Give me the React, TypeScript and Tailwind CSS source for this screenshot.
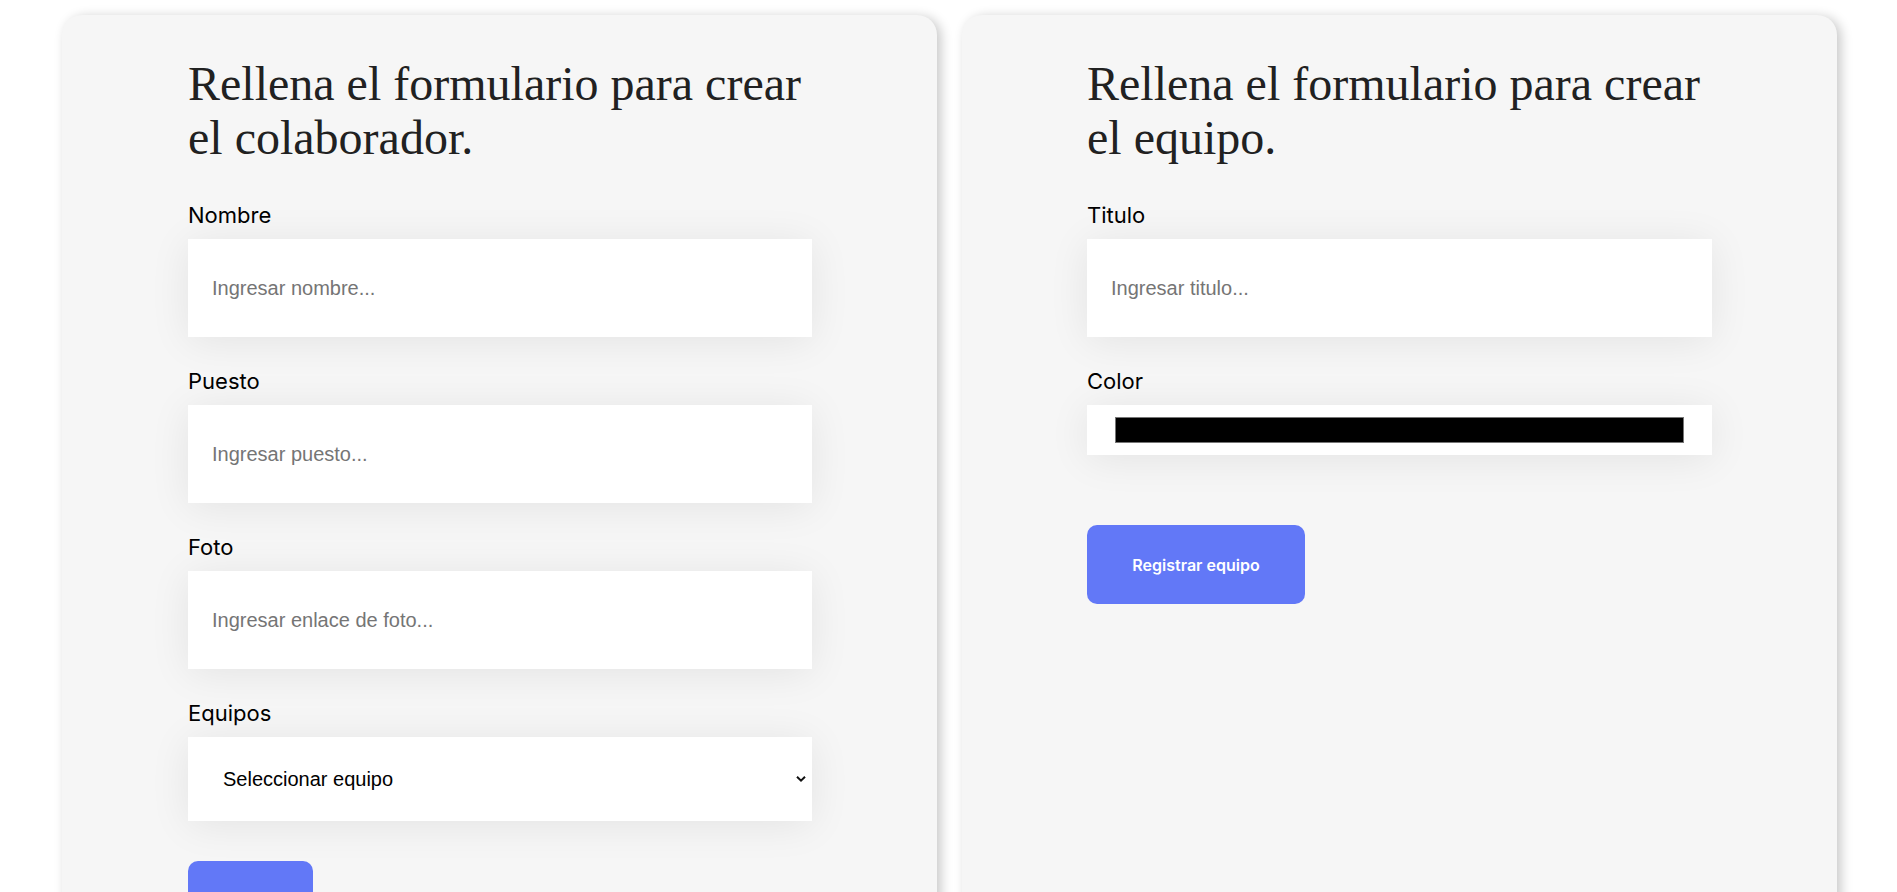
import React from "react";

interface Field {
  id: string;
  label: string;
  placeholder: string;
}

const collaboratorFields: Field[] = [
  { id: "nombre", label: "Nombre", placeholder: "Ingresar nombre..." },
  { id: "puesto", label: "Puesto", placeholder: "Ingresar puesto..." },
  { id: "foto", label: "Foto", placeholder: "Ingresar enlace de foto..." },
];

const labelClass =
  "block mb-[11px] text-[22px] leading-[26px] text-black font-['Inter',sans-serif]";

const boxShadow = "shadow-[0_4px_40px_rgba(0,0,0,0.08)]";

function TextField({ field }: { field: Field }) {
  return (
    <div className="mb-[31px]">
      <label htmlFor={field.id} className={labelClass}>
        {field.label}
      </label>
      <input
        id={field.id}
        type="text"
        placeholder={field.placeholder}
        className={`block h-[98px] w-full bg-white px-[24px] text-[20px] text-black outline-none placeholder:text-[#757575] font-['Liberation_Sans',Arial,sans-serif] ${boxShadow}`}
      />
    </div>
  );
}

function Title({ children }: { children: React.ReactNode }) {
  return (
    <h2 className="mb-[37px] text-[48px] leading-[54px] font-normal text-[#212121] font-['Liberation_Serif','Times_New_Roman',serif]">
      {children}
    </h2>
  );
}

export default function App() {
  return (
    <div className="min-h-screen overflow-hidden bg-white">
      <div className="grid grid-cols-2 gap-[25px] pl-[62px] pr-[60px] pt-[15px]">
        {/* Formulario colaborador */}
        <section className="min-h-[1000px] rounded-[20px] bg-[#f6f6f6] pl-[126px] pt-[42px] shadow-[4px_2px_12px_rgba(0,0,0,0.22)]">
          <form className="w-[624px]" onSubmit={(e) => e.preventDefault()}>
            <Title>Rellena el formulario para crear el colaborador.</Title>
            {collaboratorFields.map((field) => (
              <TextField key={field.id} field={field} />
            ))}
            <div>
              <label htmlFor="equipos" className={labelClass}>
                Equipos
              </label>
              <div className="relative">
                <select
                  id="equipos"
                  defaultValue=""
                  className={`block h-[84px] w-full appearance-none bg-white pl-[35px] text-[20px] text-black outline-none font-['Liberation_Sans',Arial,sans-serif] ${boxShadow}`}
                >
                  <option value="" disabled>
                    Seleccionar equipo
                  </option>
                  <option>Programación</option>
                  <option>Front End</option>
                  <option>Data Science</option>
                  <option>Devops</option>
                  <option>UX y Diseño</option>
                  <option>Móvil</option>
                  <option>Innovación y Gestión</option>
                </select>
                <svg
                  className="pointer-events-none absolute right-[6px] top-1/2 -translate-y-1/2"
                  width="10"
                  height="7"
                  viewBox="0 0 10 7"
                  fill="none"
                >
                  <polyline
                    points="1,1.2 5,5.2 9,1.2"
                    stroke="#111"
                    strokeWidth="2"
                  />
                </svg>
              </div>
            </div>
            <button
              type="submit"
              className="mt-[40px] h-[79px] w-[125px] rounded-[10px] bg-[#6278f7] text-[16px] font-semibold text-white font-['Inter',sans-serif]"
            >
              Crear
            </button>
          </form>
        </section>

        {/* Formulario equipo */}
        <section className="min-h-[1000px] rounded-[20px] bg-[#f6f6f6] pl-[125px] pt-[42px] shadow-[4px_2px_12px_rgba(0,0,0,0.22)]">
          <form className="w-[625px]" onSubmit={(e) => e.preventDefault()}>
            <Title>Rellena el formulario para crear el equipo.</Title>
            <TextField
              field={{ id: "titulo", label: "Titulo", placeholder: "Ingresar titulo..." }}
            />
            <div>
              <span className={labelClass}>Color</span>
              <div className={`h-[50px] bg-white px-[28px] py-[12px] ${boxShadow}`}>
                <div className="h-full w-full border border-[#767676] bg-black" />
              </div>
            </div>
            <button
              type="submit"
              className="mt-[70px] h-[79px] w-[218px] rounded-[10px] bg-[#6278f7] text-[16px] font-semibold text-white font-['Inter',sans-serif]"
            >
              Registrar equipo
            </button>
          </form>
        </section>
      </div>
    </div>
  );
}
